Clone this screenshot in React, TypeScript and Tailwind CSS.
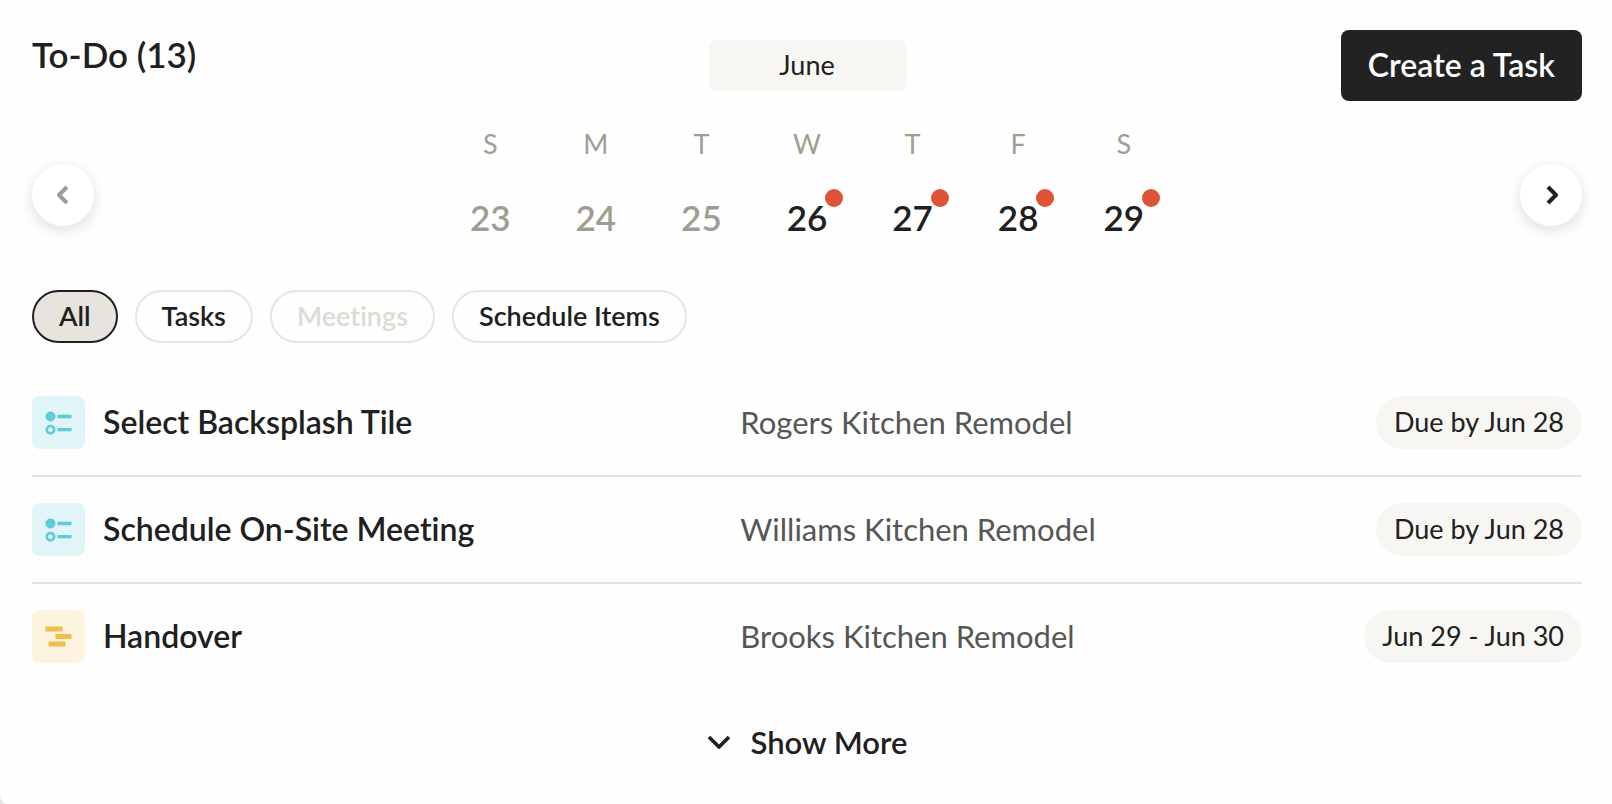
import React, { useState } from "react";

type Day = { letter: string; date: number; active: boolean };
type Item = { title: string; project: string; due: string; kind: "task" | "schedule" };

const DAYS: Day[] = [
  { letter: "S", date: 23, active: false },
  { letter: "M", date: 24, active: false },
  { letter: "T", date: 25, active: false },
  { letter: "W", date: 26, active: true },
  { letter: "T", date: 27, active: true },
  { letter: "F", date: 28, active: true },
  { letter: "S", date: 29, active: true },
];

const FILTERS = [
  { label: "All", disabled: false },
  { label: "Tasks", disabled: false },
  { label: "Meetings", disabled: true },
  { label: "Schedule Items", disabled: false },
];

const ITEMS: Item[] = [
  { title: "Select Backsplash Tile", project: "Rogers Kitchen Remodel", due: "Due by Jun 28", kind: "task" },
  { title: "Schedule On-Site Meeting", project: "Williams Kitchen Remodel", due: "Due by Jun 28", kind: "task" },
  { title: "Handover", project: "Brooks Kitchen Remodel", due: "Jun 29 - Jun 30", kind: "schedule" },
];

function TaskIcon() {
  return (
    <span className="flex size-[53px] shrink-0 items-center justify-center rounded-lg bg-[#dff5f8]">
      <svg width="27" height="24" viewBox="0 0 27 24" aria-hidden="true">
        <circle cx="5.5" cy="5.5" r="5" fill="#5dcbd8" />
        <circle cx="5.5" cy="18.7" r="3.7" fill="none" stroke="#5dcbd8" strokeWidth="2.6" />
        <path d="M12.5 5.5H26.5M12.5 18.7H26.5" stroke="#5dcbd8" strokeWidth="3.3" />
      </svg>
    </span>
  );
}

function ScheduleIcon() {
  return (
    <span className="flex size-[53px] shrink-0 items-center justify-center rounded-lg bg-[#fdf4df]">
      <svg width="27" height="21" viewBox="0 0 27 21" aria-hidden="true">
        <path d="M0.5 0.5h17v5h-17zM10.5 8h16v5h-16zM3.5 15.5h17v5h-17z" fill="#f0bc4a" />
      </svg>
    </span>
  );
}

function ArrowButton({ direction, disabled }: { direction: "left" | "right"; disabled?: boolean }) {
  return (
    <button
      type="button"
      disabled={disabled}
      aria-label={direction === "left" ? "Previous week" : "Next week"}
      className={`flex size-[62px] items-center justify-center rounded-full bg-white shadow-[0_4px_14px_rgba(0,0,0,0.13)] ${
        disabled ? "text-[#9f9d92]" : "text-[#202020]"
      }`}
    >
      <svg width="14" height="20" viewBox="0 0 14 20" fill="none" stroke="currentColor" strokeWidth="4" aria-hidden="true">
        <path d={direction === "left" ? "M11 2L3 10l8 8" : "M4 2L12 10l-8 8"} strokeLinejoin="round" />
      </svg>
    </button>
  );
}

export default function App() {
  const [filter, setFilter] = useState("All");

  return (
    <main className="min-h-screen bg-[#e4e3dd]">
      <section className="min-h-screen rounded-bl-lg bg-[#fefefe] pt-[30px] pr-[30px] pb-8 pl-8 font-['Lato','Liberation_Sans',sans-serif] text-[#202020] [font-variant-ligatures:none]">
        <header className="grid grid-cols-[1fr_auto_1fr] items-center">
          <h1 className="self-start pt-[2px] text-[35px] leading-[44px] font-semibold">To-Do (13)</h1>
          <button type="button" className="h-[51px] w-[197px] rounded-lg bg-[#f7f6f3] text-[27px]">
            June
          </button>
          <button type="button" className="h-[71px] justify-self-end rounded-lg bg-[#222222] px-[27px] pb-[2px] text-[32px] font-semibold text-white">
            Create a Task
          </button>
        </header>

        <div className="mt-[26px] flex items-center justify-between">
          <ArrowButton direction="left" disabled />
          <ol className="grid w-[739px] grid-cols-7 pb-6">
            {DAYS.map((day) => (
              <li key={day.date} className="flex flex-col items-center gap-[35px]">
                <span className="text-[27px] leading-[34px] text-[#a09e93]">{day.letter}</span>
                <span className={`relative text-[35px] leading-[43px] font-semibold ${day.active ? "text-[#202020]" : "text-[#9f9d92]"}`}>
                  {day.date}
                  {day.active && <span className="absolute -top-[7px] -right-4 size-[18px] rounded-full bg-[#e05236]" />}
                </span>
              </li>
            ))}
          </ol>
          <ArrowButton direction="right" />
        </div>

        <div className="mt-[27px] flex flex-wrap gap-[17px]">
          {FILTERS.map(({ label, disabled }) => (
            <button
              key={label}
              type="button"
              disabled={disabled}
              aria-pressed={filter === label}
              onClick={() => setFilter(label)}
              className={`h-[53px] rounded-full border-2 px-[25px] pb-[2px] text-[27px] leading-8 font-semibold ${
                filter === label
                  ? "border-[#202020] bg-[#e6e4dd]"
                  : disabled
                    ? "border-[#e6e5df] text-[#dddbd2]"
                    : "border-[#e6e5df]"
              }`}
            >
              {label}
            </button>
          ))}
        </div>

        <ul className="mt-[27px] divide-y-2 divide-[#e4e4df]">
          {ITEMS.map((item) => (
            <li key={item.title} className="grid grid-cols-[45.7%_1fr_auto] items-center py-[26px]">
              <div className="flex items-center gap-[18px]">
                {item.kind === "task" ? <TaskIcon /> : <ScheduleIcon />}
                <h2 className="pb-[2px] text-[32px] leading-10 font-semibold">{item.title}</h2>
              </div>
              <p className="pb-[2px] text-[31px] leading-10 text-[#565654]">{item.project}</p>
              <p className="flex h-[53px] items-center rounded-full bg-[#f7f6f3] px-[18px] text-[27px]">{item.due}</p>
            </li>
          ))}
        </ul>

        <button type="button" className="mx-auto mt-8 flex h-[42px] items-center gap-5 text-[31px] font-semibold">
          <svg width="24" height="15" viewBox="0 0 24 15" fill="none" stroke="currentColor" strokeWidth="3.6" aria-hidden="true">
            <path d="M2 2l10 10L22 2" strokeLinejoin="round" />
          </svg>
          Show More
        </button>
      </section>
    </main>
  );
}
